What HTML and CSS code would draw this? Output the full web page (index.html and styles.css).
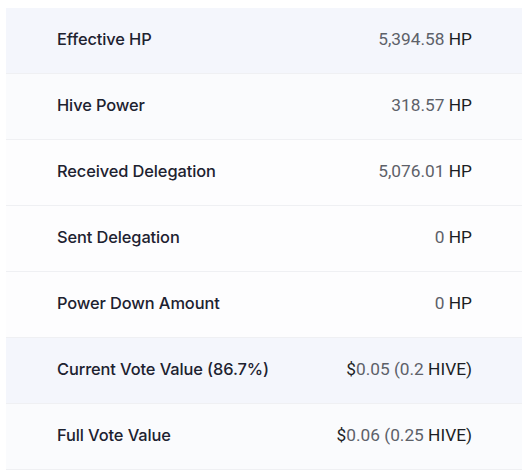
FILE: index.html
```html
<!DOCTYPE html>
<html>
<head>
<meta charset="utf-8">
<link rel="stylesheet" href="styles.css">
</head>
<body>
<div class="table">
  <div class="row shade"><span class="label">Effective HP</span><span class="value"><span class="num">5,394.58</span> HP</span></div>
  <div class="row soft"><span class="label">Hive Power</span><span class="value"><span class="num">318.57</span> HP</span></div>
  <div class="row"><span class="label">Received Delegation</span><span class="value"><span class="num">5,076.01</span> HP</span></div>
  <div class="row"><span class="label">Sent Delegation</span><span class="value"><span class="num">0</span> HP</span></div>
  <div class="row"><span class="label">Power Down Amount</span><span class="value"><span class="num">0</span> HP</span></div>
  <div class="row shade"><span class="label">Current Vote Value (86.7%)</span><span class="value">$<span class="num">0.05 (0.2</span> HIVE)</span></div>
  <div class="row soft"><span class="label">Full Vote Value</span><span class="value">$<span class="num">0.06 (0.25</span> HIVE)</span></div>
</div>
</body>
</html>
```
FILE: styles.css
```css
html, body {
  margin: 0;
  background: #ffffff;
}
body {
  padding: 8px 4px 0 6px;
}
.table {
  display: flex;
  flex-direction: column;
  width: 516px;
}
.row {
  display: flex;
  justify-content: space-between;
  align-items: center;
  height: 65px;
  border-bottom: 1px solid #eff0f3;
  padding: 0 50px 0 51px;
  background: #fdfdfe;
}
.row.shade {
  background: #f4f6fc;
}
.row.soft {
  background: #fafbfd;
}
.label {
  font-family: Inter, "Noto Sans", sans-serif;
  font-weight: 500;
  font-size: 16.4px;
  letter-spacing: -0.1px;
  color: #1d2230;
  margin-top: -3px;
}
.value {
  font-family: Roboto, sans-serif;
  font-weight: 400;
  font-size: 17.3px;
  color: #1c1e24;
  margin-top: -3px;
}
.num {
  color: #5d6169;
}
```
